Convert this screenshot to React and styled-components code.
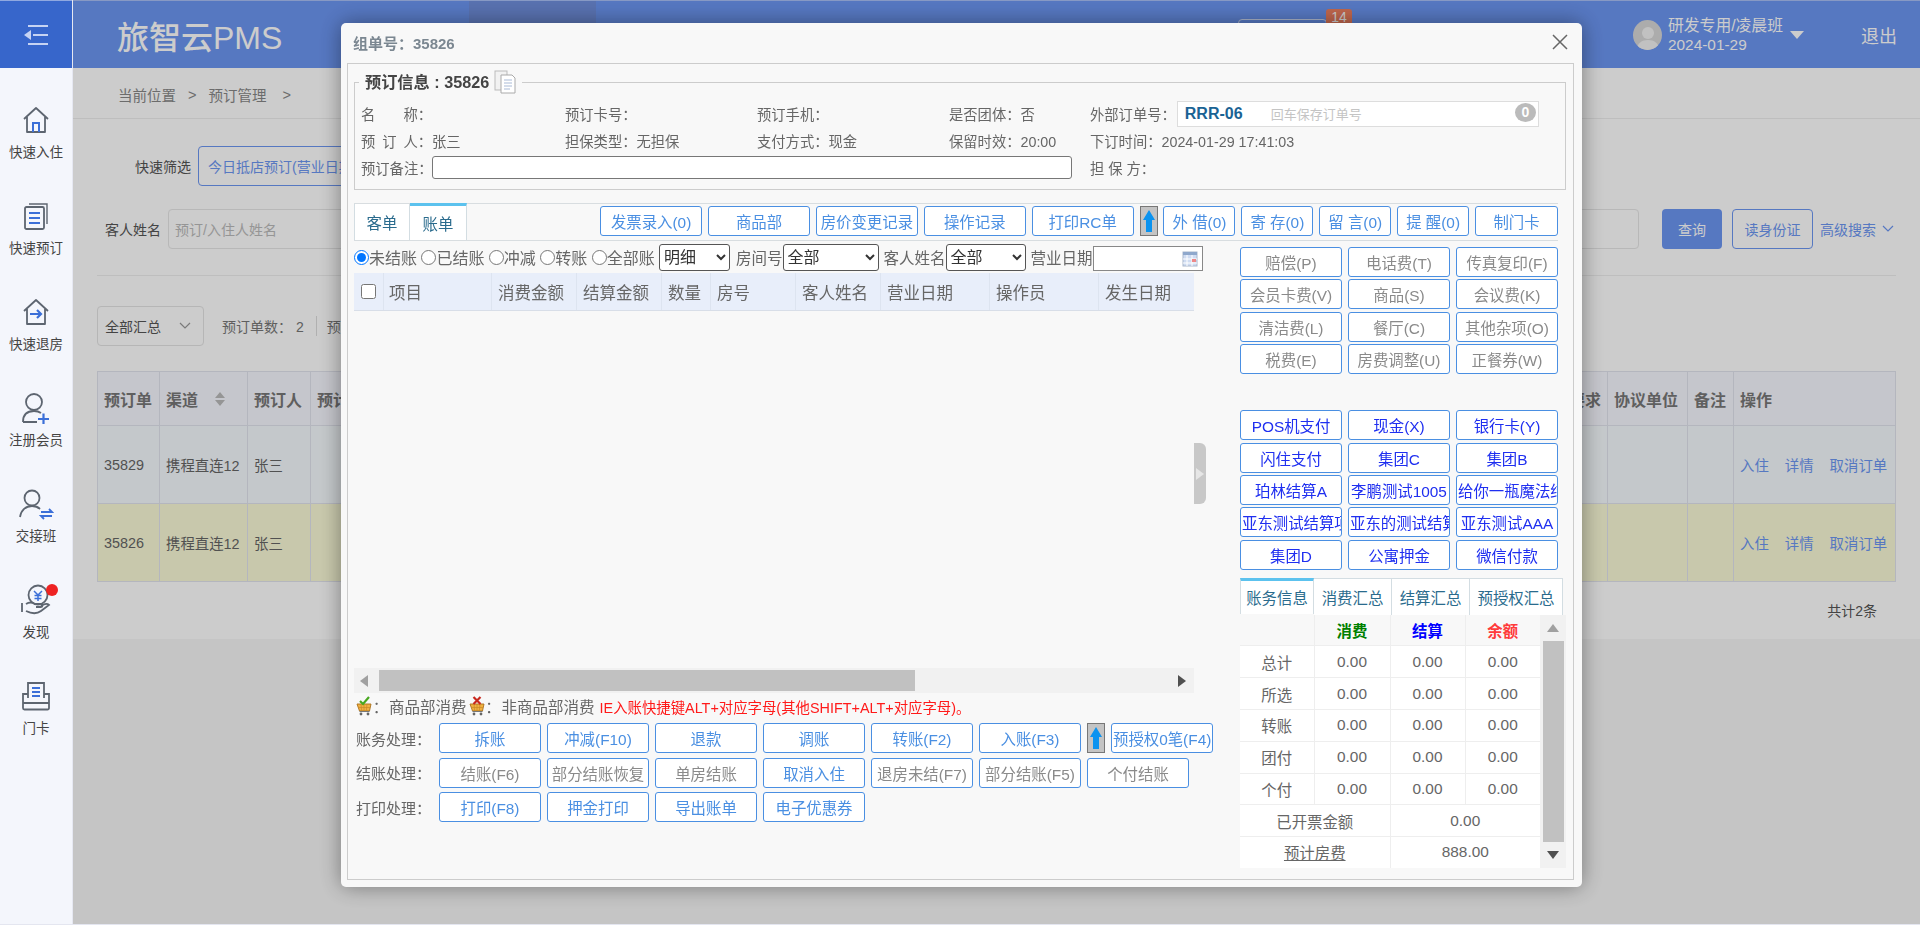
import React from 'react';
import styled, { createGlobalStyle } from 'styled-components';

const FONT = `"Liberation Sans", "Noto Sans CJK SC", sans-serif`;

const Global = createGlobalStyle`
  html, body { margin: 0; padding: 0; height: 100%; overflow: hidden; background: #fff; }
  body { font-family: ${FONT}; color: #666; }
  * { box-sizing: border-box; }
`;

const Page = styled.div`
  display: flex;
  width: 1920px;
  height: 924px;
  overflow: hidden;
`;
const BottomStrip = styled.div`
  height: 4px;
  width: 1920px;
  background: #fff;
  border-top: 1px solid #e4e6f0;
`;

/* sidebar */
const Side = styled.aside`
  width: 73px;
  flex: none;
  background: #f4f6fc;
  border-right: 1px solid #e6e8f2;
  display: flex;
  flex-direction: column;
`;
const Burger = styled.div`
  height: 68px;
  background: #3766cb;
  display: flex;
  align-items: center;
  justify-content: center;
  border-top: 1px solid #8fa8e0;
`;
const SideList = styled.div`
  display: flex;
  flex-direction: column;
  padding-top: 36px;
`;
const SideItem = styled.div`
  height: 96px;
  display: flex;
  flex-direction: column;
  align-items: center;
  font-size: 13.5px;
  color: #444;
  gap: 5px;
  position: relative;
`;
const IconSlot = styled.div`
  height: 32px;
  display: flex;
  align-items: center;
  justify-content: center;
`;
const Dot = styled.span`
  position: absolute;
  top: 0;
  left: 46px;
  width: 12px;
  height: 12px;
  border-radius: 50%;
  background: #ee2222;
`;

/* page behind the dialog */
const Main = styled.main`
  flex: 1;
  display: flex;
  flex-direction: column;
  min-width: 0;
  background: #f7f7f7;
`;
const Head = styled.header`
  height: 68px;
  flex: none;
  background: #6c96f2;
  border-top: 1px solid #a9c0f5;
  display: flex;
  align-items: center;
  color: #fff;
`;
const Brand = styled.div`
  font-size: 32px;
  margin-left: 44px;
  width: 352px;
  font-weight: 500;
  white-space: nowrap;
`;
const NavBlock = styled.div`
  width: 127px;
  height: 67px;
  background: #6f8edc;
`;
const NavBox = styled.div`
  margin-left: 642px;
  width: 89px;
  height: 30px;
  align-self: flex-start;
  margin-top: 18px;
  border: 1px solid #d5e0fb;
  border-radius: 4px;
  position: relative;
`;
const NavBadge = styled.span`
  position: absolute;
  top: -11px;
  right: -26px;
  width: 26px;
  height: 20px;
  background: #f08060;
  border-radius: 3px;
  font-size: 14px;
  color: #fff;
  text-align: center;
`;
const UserBox = styled.div`
  margin-left: 306px;
  display: flex;
  align-items: center;
  gap: 6px;
`;
const Avatar = styled.div`
  width: 29px;
  height: 30px;
  border-radius: 50%;
  background: #d8d8d8;
  display: flex;
  align-items: flex-end;
  justify-content: center;
  overflow: hidden;
`;
const UserText = styled.div`
  font-size: 15.4px;
  line-height: 19px;
  width: 116px;
  color: #fff;
  white-space: nowrap;
`;
const UserName = styled.div`
  font-size: 15.8px;
`;
const Caret = styled.span`
  width: 0;
  height: 0;
  border-left: 7px solid transparent;
  border-right: 7px solid transparent;
  border-top: 8px solid #fff;
`;
const Logout = styled.div`
  margin-left: 57px;
  font-size: 18px;
`;
const Crumbs = styled.div`
  height: 51px;
  flex: none;
  background: #fff;
  border-bottom: 1px solid #eee;
  padding: 3px 0 0 45px;
  display: flex;
  align-items: center;
  gap: 12px;
  font-size: 14.5px;
  color: #888;
`;
const Board = styled.div`
  height: 520px;
  flex: none;
  background: #fff;
  padding: 0 24px;
  display: flex;
  flex-direction: column;
`;
const QuickRow = styled.div`
  display: flex;
  align-items: center;
  height: 40px;
  margin-top: ${p => p.$top}px;
  font-size: 14px;
  color: #555;
`;
const QuickLabel = styled.span`
  margin-left: ${p => p.$left}px;
  margin-right: 7px;
`;
const QuickBtn = styled.div`
  width: 200px;
  height: 40px;
  border: 1px solid #6c96f2;
  border-radius: 4px;
  color: #6c96f2;
  display: flex;
  align-items: center;
  padding-left: 9px;
  white-space: nowrap;
  overflow: hidden;
`;
const Field = styled.div`
  width: ${p => p.$w}px;
  margin-left: ${p => p.$left || 0}px;
  height: 40px;
  border: 1px solid #e6e6e6;
  border-radius: 4px;
  padding-left: 6px;
  display: flex;
  align-items: center;
  color: #bbb;
`;
const QueryBtn = styled.div`
  width: 60px;
  height: 40px;
  margin-left: 23px;
  background: #6c96f2;
  border-radius: 4px;
  color: #fff;
  display: flex;
  align-items: center;
  justify-content: center;
`;
const ReadBtn = styled.div`
  width: 81px;
  height: 40px;
  margin-left: 10px;
  border: 1px solid #6c96f2;
  border-radius: 4px;
  color: #6c96f2;
  display: flex;
  align-items: center;
  justify-content: center;
`;
const MoreLink = styled.span`
  margin-left: 7px;
  color: #6c96f2;
  display: flex;
  align-items: center;
  gap: 6px;
`;
const Rule = styled.div`
  height: 1px;
  background: #eee;
  margin-top: 26px;
`;
const SumRow = styled.div`
  display: flex;
  align-items: center;
  margin-top: 30px;
  height: 40px;
  font-size: 14px;
  color: #777;
`;
const SumSelect = styled.div`
  width: 107px;
  height: 40px;
  border: 1px solid #e4e4e4;
  border-radius: 4px;
  padding: 0 12px 0 7px;
  display: flex;
  align-items: center;
  justify-content: space-between;
  color: #555;
  margin-right: 18px;
`;
const SumItem = styled.span`
  padding-right: 12px;
  margin-right: 10px;
  border-right: ${p => (p.$line ? '1px solid #ddd' : 'none')};
`;
const OrderGrid = styled.div`
  margin-top: 25px;
  display: grid;
  grid-template-columns: 62px 88px 63px 1220px 77px 80px 46px 162px;
  grid-template-rows: 54px 78px 78px;
  border: 1px solid #e2e4ee;
  border-width: 1px 0 0 1px;
`;
const OrderCell = styled.div`
  background: ${p => (p.$head ? '#f7f8ff' : p.$yellow ? '#fbfbd8' : '#f6fbfe')};
  border-right: 1px solid #e2e4ee;
  border-bottom: 1px solid #e2e4ee;
  display: flex;
  align-items: center;
  padding-left: 6px;
  font-size: ${p => (p.$head ? 16 : 14.4)}px;
  font-weight: ${p => (p.$head ? 700 : 400)};
  color: ${p => (p.$head ? '#777' : '#666')};
  gap: 16px;
  white-space: nowrap;
  overflow: hidden;
`;
const RowLink = styled.span`
  color: #6c96f2;
`;
const Total = styled.div`
  margin-top: 18px;
  text-align: right;
  padding-right: 19px;
  font-size: 14px;
  color: #555;
`;

/* overlay and dialog */
const Shade = styled.div`
  position: fixed;
  left: 73px;
  top: 0;
  right: 0;
  bottom: 4px;
  background: rgba(0, 0, 0, 0.2);
`;
const Dialog = styled.div`
  position: fixed;
  left: 341px;
  top: 23px;
  width: 1241px;
  height: 864px;
  background: #f8f8f8;
  border-radius: 5px;
  box-shadow: 0 0 22px rgba(0, 0, 0, 0.4);
  display: flex;
  flex-direction: column;
  padding: 0 8px 7px 6px;
  font-size: 14.3px;
  color: #666;
`;
const DialogHead = styled.div`
  height: 40px;
  flex: none;
  display: flex;
  align-items: center;
  justify-content: space-between;
  padding: 0 5px 2px 6px;
  font-size: 15px;
  font-weight: 700;
  color: #7b8791;
`;
const DialogBody = styled.div`
  flex: 1;
  border: 1px solid #ccc;
  padding: 6px 7px 0 6px;
  display: flex;
  flex-direction: column;
  min-height: 0;
`;
const Info = styled.fieldset`
  margin: 0;
  padding: 6px 0 8px 6px;
  border: 1px solid #ccc;
  min-width: 0;
`;
const InfoTitle = styled.legend`
  margin-left: -2px;
  padding: 0 6px 0 6px;
  height: 24px;
  line-height: 24px;
  font-size: 16.2px;
  font-weight: 700;
  color: #444;
  display: flex;
  align-items: center;
  gap: 5px;
`;
const InfoGrid = styled.div`
  display: grid;
  grid-template-columns: 204px 192px 192px 141px 1fr;
  grid-auto-rows: 27px;
  align-items: center;
  white-space: nowrap;
`;
const NameCell = styled.span`
  display: inline-flex;
  width: 71px;
  justify-content: space-between;
  vertical-align: bottom;
`;
const NoteCell = styled.div`
  grid-column: span 4;
  display: flex;
  align-items: center;
`;
const NoteInput = styled.input`
  width: 640px;
  height: 23px;
  border: 1px solid #777;
  border-radius: 3px;
  background: #fff;
`;
const OutRow = styled.div`
  display: flex;
  align-items: center;
  gap: 1px;
`;
const OutBox = styled.div`
  width: 362px;
  height: 26px;
  border: 1px solid #ddd;
  background: #fff;
  display: flex;
  align-items: center;
  padding-left: 7px;
  position: relative;
  font-size: 13px;
  color: #c4c4c4;
`;
const OutCode = styled.b`
  width: 86px;
  font-size: 16px;
  color: #1a6394;
`;
const OutBadge = styled.span`
  position: absolute;
  right: 2px;
  top: 1px;
  width: 21px;
  height: 19px;
  border-radius: 50%;
  background: #bbb;
  color: #fff;
  font-size: 14px;
  font-weight: 700;
  text-align: center;
  line-height: 18px;
`;
const TabStrip = styled.div`
  margin: 13px 8px 0 0;
  height: 38px;
  flex: none;
  border-top: 1px solid #d8dde0;
  border-bottom: 1px solid #d8dde0;
  display: flex;
  align-items: flex-start;
`;
const Tab = styled.div`
  width: ${p => p.$w}px;
  height: ${p => (p.$on ? 37 : 36)}px;
  display: flex;
  align-items: center;
  justify-content: center;
  background: #fff;
  border: 1px solid #d3dde2;
  border-width: 0 1px 0 ${p => (p.$first ? 1 : 0)}px;
  border-top: ${p => (p.$on ? '3px solid #5cc2ee' : 'none')};
  margin-top: ${p => (p.$on ? -1 : 0)}px;
  font-size: 15.4px;
  color: #2a6b8d;
  white-space: nowrap;
`;
const TopButtons = styled.div`
  margin-left: auto;
  padding-top: 2px;
  display: flex;
  gap: 5.9px;
`;
const Btn = styled.button`
  width: ${p => p.$w || 102}px;
  height: 30px;
  flex: none;
  padding: 0 1px;
  background: #fff;
  border: 1px solid #4a8fe2;
  border-radius: 3px;
  font-family: ${FONT};
  font-size: 15.4px;
  white-space: nowrap;
  overflow: hidden;
  color: ${p => ({ gray: '#8a8a8a', pay: '#1f2ff0' }[p.$tone] || '#4a8fe2')};
`;
const ArrowBtn = styled.div`
  width: 18px;
  height: 30px;
  flex: none;
  background: #c4c4c4;
  border: 1px solid #777;
  display: flex;
  align-items: center;
  justify-content: center;
`;
const Work = styled.div`
  display: grid;
  grid-template-columns: 840px 326px;
  column-gap: 46px;
  flex: 1;
  min-height: 0;
`;
const LeftCol = styled.div`
  display: flex;
  flex-direction: column;
  min-width: 0;
`;
const FilterRow = styled.div`
  height: 32px;
  flex: none;
  display: flex;
  align-items: center;
  font-size: 15.5px;
  white-space: nowrap;
`;
const RadioLabel = styled.label`
  display: flex;
  align-items: center;
  margin-right: 4.4px;
  font-size: 16px;
`;
const Radio = styled.input`
  margin: 0;
  width: 15px;
  height: 15px;
`;
const Pick = styled.select`
  width: ${p => p.$w}px;
  height: 27px;
  margin-right: ${p => p.$right}px;
  flex: none;
  background: #fff;
  border: 1px solid #555;
  border-radius: 3px;
  font-family: ${FONT};
  font-size: 16px;
  color: #333;
`;
const DateBox = styled.div`
  width: 110px;
  height: 25px;
  margin-top: 3px;
  flex: none;
  background: #fff;
  border: 1px solid #888;
  display: flex;
  align-items: center;
  justify-content: flex-end;
  padding-right: 4px;
`;
const BillArea = styled.div`
  height: 395px;
  flex: none;
  position: relative;
`;
const BillHead = styled.div`
  height: 38px;
  display: grid;
  grid-template-columns: 30px 108px 85px 85px 49px 85px 85px 109px 109px 95px;
  background: #e8eefa;
  border-bottom: 1px solid #d8dee8;
`;
const BillCell = styled.div`
  display: flex;
  align-items: center;
  padding-left: ${p => p.$pad ?? 6}px;
  border-right: ${p => (p.$last ? 'none' : '1px solid #dde4f0')};
  font-size: 16.5px;
  color: #666;
  white-space: nowrap;
  overflow: hidden;
`;
const Check = styled.input`
  margin: 0;
  width: 15px;
  height: 15px;
`;
const Handle = styled.div`
  position: absolute;
  right: -12px;
  top: 170px;
  width: 12px;
  height: 61px;
  background: #c8c8c8;
  border-radius: 0 6px 6px 0;
  display: flex;
  align-items: center;
  justify-content: center;
`;
const HScroll = styled.div`
  height: 25px;
  flex: none;
  background: #f1f1f1;
  display: flex;
  align-items: center;
  justify-content: space-between;
  padding-right: 8px;
`;
const HThumbWrap = styled.div`
  display: flex;
  align-items: center;
  gap: 11px;
  padding-left: 6px;
`;
const HThumb = styled.div`
  width: 536px;
  height: 21px;
  background: #c1c1c1;
`;
const Legend = styled.div`
  height: 30px;
  flex: none;
  display: flex;
  align-items: center;
  font-size: 15.5px;
  white-space: nowrap;
  padding: 0 0 4px 2px;
`;
const Colon = styled.span`
  width: 17px;
  text-align: center;
`;
const LegendText = styled.span`
  margin-right: 2px;
`;
const Warn = styled.span`
  color: #ff1a1a;
  font-size: 14.4px;
  margin-left: 5px;
`;
const OpRows = styled.div`
  display: flex;
  flex-direction: column;
  gap: 4.5px;
`;
const OpRow = styled.div`
  display: flex;
  align-items: center;
  gap: 6px;
`;
const OpLabel = styled.div`
  width: 79px;
  padding-left: 2px;
  flex: none;
  font-size: 15px;
  white-space: nowrap;
`;
const RightCol = styled.div`
  padding-top: 6px;
  display: flex;
  flex-direction: column;
`;
const BtnGrid = styled.div`
  display: grid;
  grid-template-columns: repeat(3, 102px);
  column-gap: 6px;
  row-gap: 2.4px;
  margin-top: ${p => p.$top || 0}px;
`;
const SumTabs = styled.div`
  display: flex;
  margin-top: 8px;
  width: 323px;
  height: 37px;
  border-top: 1px solid #d3dde2;
`;
const SumTab = styled(Tab)`
  height: 36px;
  margin-top: ${p => (p.$on ? -1 : 0)}px;
`;
const SumPanel = styled.div`
  display: flex;
`;
const SumTable = styled.table`
  width: 300px;
  height: 253px;
  table-layout: fixed;
  border-collapse: collapse;
  background: #fff;
  font-size: 15.4px;
  color: #666;
  text-align: center;
  td { border: 1px solid #eee; padding: 0; }
  tr:first-child td { background: #f8f8f8; border-top: none; }
  tr td:first-child { border-left: none; }
  tr td:last-child { border-right: none; }
  tr:last-child td { border-bottom: none; }
`;
const SumCol = styled.col`
  width: ${p => p.$w}px;
`;
const Heading = styled.b`
  color: ${p => p.$c};
`;
const Booked = styled.span`
  text-decoration: underline;
`;
const VScroll = styled.div`
  width: 26px;
  height: 253px;
  background: #f1f1f1;
  display: flex;
  flex-direction: column;
  align-items: center;
  justify-content: space-between;
`;
const ArrowSlot = styled.div`
  height: 26px;
  display: flex;
  align-items: center;
  justify-content: center;
`;
const VThumb = styled.div`
  width: 21px;
  flex: 1;
  background: #c1c1c1;
`;

const HomeIcon = () => (
  <svg width="30" height="30" viewBox="0 0 30 30" fill="none">
    <path d="M3 14 15 3l12 11M6 12v15h18V12" stroke="#5d6570" strokeWidth="1.8" strokeLinejoin="round" />
    <path d="M12 27v-9h6v9" stroke="#3b6fd8" strokeWidth="2" />
  </svg>
);
const DocIcon = () => (
  <svg width="30" height="30" viewBox="0 0 30 30" fill="none">
    <rect x="4" y="6" width="19" height="22" rx="1.5" stroke="#5d6570" strokeWidth="1.8" />
    <path d="M8 3h18v20" stroke="#5d6570" strokeWidth="1.4" />
    <path d="M8 12h11M8 17h11M8 22h11" stroke="#3b6fd8" strokeWidth="2.2" />
  </svg>
);
const OutIcon = () => (
  <svg width="30" height="30" viewBox="0 0 30 30" fill="none">
    <path d="M3 14 15 3l12 11M6 12v15h18V12" stroke="#5d6570" strokeWidth="1.8" strokeLinejoin="round" />
    <path d="M9 17h11M16 13l4 4-4 4" stroke="#3b6fd8" strokeWidth="2.2" />
  </svg>
);
const JoinIcon = () => (
  <svg width="30" height="32" viewBox="0 0 30 32" fill="none">
    <circle cx="13" cy="10" r="8" stroke="#5d6570" strokeWidth="1.8" />
    <path d="M2 30c0-7 4-11 11-11 3 0 5 .6 7 2M2 30h14" stroke="#5d6570" strokeWidth="1.8" />
    <path d="M17 27h11M22.500 21.500v11" stroke="#3b6fd8" strokeWidth="2.2" />
  </svg>
);
const ShiftIcon = () => (
  <svg width="36" height="32" viewBox="0 0 36 32" fill="none">
    <circle cx="14" cy="10" r="7.500" stroke="#5d6570" strokeWidth="1.8" />
    <path d="M2 29c1-7 6-11 12-11 3 0 6 1 8 3" stroke="#5d6570" strokeWidth="1.8" />
    <path d="M23 24h11l-3-3M34 28H23l3 3" stroke="#3b6fd8" strokeWidth="1.8" />
  </svg>
);
const HandIcon = () => (
  <svg width="32" height="32" viewBox="0 0 32 32" fill="none">
    <circle cx="18" cy="11" r="9.500" stroke="#5d6570" strokeWidth="1.8" />
    <path d="M14 7l4 4 4-4M18 11v6M14.500 11.500h7M14.500 14.500h7" stroke="#3b6fd8" strokeWidth="1.5" />
    <path d="M2 19v9M6 20c3-2 6-2 9 0h6c2 0 2 3 0 3h-5M6 27c6 3 11 3 15 0l8-6c-2-2-5-1-8 1" stroke="#5d6570" strokeWidth="1.8" />
  </svg>
);
const CardIcon = () => (
  <svg width="30" height="30" viewBox="0 0 30 30" fill="none">
    <path d="M7 17V2h16v15" stroke="#5d6570" strokeWidth="1.8" />
    <path d="M11 7h8M11 11h8M11 15h8" stroke="#3b6fd8" strokeWidth="1.8" />
    <path d="M7 13H2v14a1.500 1.500 0 0 0 1.500 1.500h23A1.500 1.500 0 0 0 28 27V13h-5M2 22h26" stroke="#5d6570" strokeWidth="1.8" />
  </svg>
);
const Chevron = ({ c = '#999' }) => (
  <svg width="12" height="8" viewBox="0 0 12 8" fill="none">
    <path d="M1 1l5 5 5-5" stroke={c} strokeWidth="1.2" />
  </svg>
);
const CopyIcon = () => (
  <svg width="22" height="24" viewBox="0 0 22 24" fill="none">
    <rect x="1" y="1" width="12" height="19" fill="#f2f2f2" stroke="#bbb" />
    <path d="M7 5h11l3 3v15H7z" fill="#fff" stroke="#aaa" />
    <path d="M10 10h8M10 13h8M10 16h8M10 19h6" stroke="#a9bad6" />
  </svg>
);
const UpArrow = () => (
  <svg width="14" height="24" viewBox="0 0 14 24">
    <path d="M7 1l6 10H10v12H4V11H1z" fill="#0b93f0" />
  </svg>
);
const CartIcon = ({ bad }) => (
  <svg width="16" height="20" viewBox="0 0 16 20" fill="none">
    <path d="M1 8h14l-1.500 7h-10z" fill="#f0b040" stroke="#a8701c" strokeWidth=".9" />
    <path d="M5 8l.7 7M8 8v7M11 8l-.7 7M2 11.500h12" stroke="#c98a28" strokeWidth=".7" />
    <path d="M3.500 15.500h10" stroke="#777" strokeWidth="1" />
    <circle cx="5" cy="18" r="1.400" fill="#666" />
    <circle cx="12" cy="18" r="1.400" fill="#666" />
    {bad
      ? <path d="M4.500 1l7 7M11.500 1l-7 7" stroke="#c8281e" strokeWidth="2.200" />
      : <path d="M4 5l3 3 6-7" stroke="#48a820" strokeWidth="2.200" />}
  </svg>
);
const CalendarIcon = () => (
  <svg width="16" height="16" viewBox="0 0 16 16">
    <rect x="1" y="1" width="14" height="14" fill="#cfdcf2" stroke="#aab8cc" />
    <rect x="1" y="1" width="14" height="3" fill="#8fa8cc" />
    <path d="M5 4v11M10 4v11M1 8h14M1 12h14" stroke="#fff" />
    <rect x="10" y="8" width="4" height="3" fill="#e88" />
  </svg>
);
const Tri = ({ dir, c }) => {
  const paths = { up: 'M0 8L6 0l6 8z', down: 'M0 0l6 8 6-8z', left: 'M8 0v12L0 6z', right: 'M0 0v12l8-6z' };
  const vertical = dir === 'up' || dir === 'down';
  return (
    <svg width={vertical ? 12 : 8} height={vertical ? 8 : 12} viewBox={vertical ? '0 0 12 8' : '0 0 8 12'}>
      <path d={paths[dir]} fill={c} />
    </svg>
  );
};

const sideItems = [
  ['快速入住', <HomeIcon />],
  ['快速预订', <DocIcon />],
  ['快速退房', <OutIcon />],
  ['注册会员', <JoinIcon />],
  ['交接班', <ShiftIcon />],
  ['发现', <HandIcon />, true],
  ['门卡', <CardIcon />],
];
const topButtons = [
  ['发票录入(0)'], ['商品部'], ['房价变更记录'], ['操作记录'], ['打印RC单'], null,
  ['外 借(0)', 72], ['寄 存(0)', 72], ['留 言(0)', 72], ['提 醒(0)', 72], ['制门卡', 83],
];
const billCols = ['消费金额', '结算金额', '数量', '房号', '客人姓名', '营业日期', '操作员', '发生日期'];
const feeButtons = [
  '赔偿(P)', '电话费(T)', '传真复印(F)', '会员卡费(V)', '商品(S)', '会议费(K)',
  '清洁费(L)', '餐厅(C)', '其他杂项(O)', '税费(E)', '房费调整(U)', '正餐券(W)',
];
const payButtons = [
  'POS机支付', '现金(X)', '银行卡(Y)', '闪住支付', '集团C', '集团B', '珀林结算A', '李鹏测试1005',
  '给你一瓶魔法结算', '亚东测试结算项', '亚东的测试结算', '亚东测试AAA', '集团D', '公寓押金', '微信付款',
];
const summaryRows = ['总计', '所选', '转账', '团付', '个付'];

const orderRow = (id, yellow) => (
  <>
    <OrderCell $yellow={yellow}>{id}</OrderCell>
    <OrderCell $yellow={yellow}>携程直连12</OrderCell>
    <OrderCell $yellow={yellow}>张三</OrderCell>
    <OrderCell $yellow={yellow} />
    <OrderCell $yellow={yellow} />
    <OrderCell $yellow={yellow} />
    <OrderCell $yellow={yellow} />
    <OrderCell $yellow={yellow}>
      <RowLink>入住</RowLink><RowLink>详情</RowLink><RowLink>取消订单</RowLink>
    </OrderCell>
  </>
);

export default function App() {
  return (
    <>
      <Global />
      <Page>
        <Side>
          <Burger>
            <svg width="26" height="22" viewBox="0 0 26 22" fill="none">
              <path d="M5 2h20M10 11h15M5 20h20" stroke="#c6d3f3" strokeWidth="2.200" />
              <path d="M1 11l7-5v10z" fill="#c6d3f3" />
            </svg>
          </Burger>
          <SideList>
            {sideItems.map(([label, icon, dot]) => (
              <SideItem key={label}>
                <IconSlot>{icon}</IconSlot>
                {dot && <Dot />}
                {label}
              </SideItem>
            ))}
          </SideList>
        </Side>

        <Main>
          <Head>
            <Brand>旅智云PMS</Brand>
            <NavBlock />
            <NavBox><NavBadge>14</NavBadge></NavBox>
            <UserBox>
              <Avatar>
                <svg width="22" height="26" viewBox="0 0 22 26"><circle cx="11" cy="9" r="6" fill="#f2f2f2" /><path d="M0 26c0-7 5-10 11-10s11 3 11 10z" fill="#f2f2f2" /></svg>
              </Avatar>
              <UserText><UserName>研发专用/凌晨班</UserName>2024-01-29</UserText>
              <Caret />
            </UserBox>
            <Logout>退出</Logout>
          </Head>
          <Crumbs><span>当前位置</span><span>&gt;</span><span>预订管理</span><span>&nbsp;&gt;</span></Crumbs>
          <Board>
            <QuickRow $top={27}>
              <QuickLabel $left={38}>快速筛选</QuickLabel>
              <QuickBtn>今日抵店预订(营业日期)</QuickBtn>
            </QuickRow>
            <QuickRow $top={23}>
              <QuickLabel $left={8}>客人姓名</QuickLabel>
              <Field $w={300}>预订/入住人姓名</Field>
              <Field $w={339} $left={832} />
              <QueryBtn>查询</QueryBtn>
              <ReadBtn>读身份证</ReadBtn>
              <MoreLink>高级搜索<Chevron c="#6c96f2" /></MoreLink>
            </QuickRow>
            <Rule />
            <SumRow>
              <SumSelect>全部汇总<Chevron /></SumSelect>
              <SumItem $line>预订单数：&nbsp;2</SumItem>
              <SumItem>预订间数：2</SumItem>
            </SumRow>
            <OrderGrid>
              {['预订单', '渠道', '预订人', '预计到店', '特殊要求', '协议单位', '备注', '操作'].map(h => (
                <OrderCell $head key={h}>
                  {h}
                  {h === '渠道' && (
                    <svg width="12" height="16" viewBox="0 0 12 16"><path d="M6 1l5 6H1zM6 15l5-6H1z" fill="#bbb" /></svg>
                  )}
                </OrderCell>
              ))}
              {orderRow('35829', false)}
              {orderRow('35826', true)}
            </OrderGrid>
            <Total>共计2条</Total>
          </Board>
        </Main>

        <Shade />

        <Dialog>
          <DialogHead>
            组单号：35826
            <svg width="18" height="18" viewBox="0 0 18 18" fill="none">
              <path d="M2 2l14 14M16 2L2 16" stroke="#666" strokeWidth="1.500" />
            </svg>
          </DialogHead>
          <DialogBody>
            <Info>
              <InfoTitle>预订信息 : 35826 <CopyIcon /></InfoTitle>
              <InfoGrid>
                <span><NameCell><span>名</span><span>称：</span></NameCell></span>
                <span>预订卡号：</span>
                <span>预订手机：</span>
                <span>是否团体：否</span>
                <OutRow>外部订单号：<OutBox><OutCode>RRR-06</OutCode>回车保存订单号<OutBadge>0</OutBadge></OutBox></OutRow>
                <span><NameCell><span>预</span><span>订</span><span>人：</span></NameCell>张三</span>
                <span>担保类型：无担保</span>
                <span>支付方式：现金</span>
                <span>保留时效：20:00</span>
                <span>下订时间：2024-01-29 17:41:03</span>
                <NoteCell>预订备注：<NoteInput readOnly /></NoteCell>
                <span>担 保 方：</span>
              </InfoGrid>
            </Info>

            <TabStrip>
              <Tab $w={56} $first>客单</Tab>
              <Tab $w={57} $on>账单</Tab>
              <TopButtons>
                {topButtons.map((b, i) => (b
                  ? <Btn key={b[0]} $w={b[1]}>{b[0]}</Btn>
                  : <ArrowBtn key={i}><UpArrow /></ArrowBtn>))}
              </TopButtons>
            </TabStrip>

            <Work>
              <LeftCol>
                <FilterRow>
                  <RadioLabel><Radio type="radio" name="st" defaultChecked />未结账</RadioLabel>
                  <RadioLabel><Radio type="radio" name="st" />已结账</RadioLabel>
                  <RadioLabel><Radio type="radio" name="st" />冲减</RadioLabel>
                  <RadioLabel><Radio type="radio" name="st" />转账</RadioLabel>
                  <RadioLabel><Radio type="radio" name="st" />全部账</RadioLabel>
                  <Pick $w={71} $right={6}><option>明细</option></Pick>
                  房间号
                  <Pick $w={96} $right={5}><option>全部</option></Pick>
                  客人姓名
                  <Pick $w={80} $right={5}><option>全部</option></Pick>
                  营业日期
                  <DateBox><CalendarIcon /></DateBox>
                </FilterRow>
                <BillArea>
                  <BillHead>
                    <BillCell $pad={7}><Check type="checkbox" /></BillCell>
                    <BillCell $pad={5}>项目</BillCell>
                    {billCols.map((c, i) => <BillCell key={c} $last={i === billCols.length - 1}>{c}</BillCell>)}
                  </BillHead>
                  <Handle><Tri dir="right" c="#e6e6e6" /></Handle>
                </BillArea>
                <HScroll>
                  <HThumbWrap>
                    <Tri dir="left" c="#a0a0a0" />
                    <HThumb />
                  </HThumbWrap>
                  <Tri dir="right" c="#505050" />
                </HScroll>
                <Legend>
                  <CartIcon /><Colon>：</Colon><LegendText>商品部消费</LegendText>
                  <CartIcon bad /><Colon>：</Colon>非商品部消费
                  <Warn>IE入账快捷键ALT+对应字母(其他SHIFT+ALT+对应字母)。</Warn>
                </Legend>
                <OpRows>
                  <OpRow>
                    <OpLabel>账务处理：</OpLabel>
                    <Btn>拆账</Btn><Btn>冲减(F10)</Btn><Btn>退款</Btn><Btn>调账</Btn><Btn>转账(F2)</Btn><Btn>入账(F3)</Btn>
                    <ArrowBtn><UpArrow /></ArrowBtn>
                    <Btn>预授权0笔(F4)</Btn>
                  </OpRow>
                  <OpRow>
                    <OpLabel>结账处理：</OpLabel>
                    <Btn $tone="gray">结账(F6)</Btn><Btn $tone="gray">部分结账恢复</Btn><Btn $tone="gray">单房结账</Btn>
                    <Btn>取消入住</Btn>
                    <Btn $tone="gray">退房未结(F7)</Btn><Btn $tone="gray">部分结账(F5)</Btn><Btn $tone="gray">个付结账</Btn>
                  </OpRow>
                  <OpRow>
                    <OpLabel>打印处理：</OpLabel>
                    <Btn>打印(F8)</Btn><Btn>押金打印</Btn><Btn>导出账单</Btn><Btn>电子优惠券</Btn>
                  </OpRow>
                </OpRows>
              </LeftCol>

              <RightCol>
                <BtnGrid>
                  {feeButtons.map(b => <Btn key={b} $tone="gray">{b}</Btn>)}
                </BtnGrid>
                <BtnGrid $top={36}>
                  {payButtons.map(b => <Btn key={b} $tone="pay">{b}</Btn>)}
                </BtnGrid>
                <SumTabs>
                  <SumTab $w={74} $first $on>账务信息</SumTab>
                  <SumTab $w={78}>消费汇总</SumTab>
                  <SumTab $w={78}>结算汇总</SumTab>
                  <SumTab $w={93}>预授权汇总</SumTab>
                </SumTabs>
                <SumPanel>
                  <SumTable>
                    <colgroup><SumCol $w={74} /><SumCol $w={76} /><SumCol $w={75} /><SumCol $w={75} /></colgroup>
                    <tbody>
                      <tr>
                        <td />
                        <td><Heading $c="#008000">消费</Heading></td>
                        <td><Heading $c="#0000ff">结算</Heading></td>
                        <td><Heading $c="#ff3b3b">余额</Heading></td>
                      </tr>
                      {summaryRows.map(r => (
                        <tr key={r}><td>{r}</td><td>0.00</td><td>0.00</td><td>0.00</td></tr>
                      ))}
                      <tr><td colSpan="2">已开票金额</td><td colSpan="2">0.00</td></tr>
                      <tr><td colSpan="2"><Booked>预计房费</Booked></td><td colSpan="2">888.00</td></tr>
                    </tbody>
                  </SumTable>
                  <VScroll>
                    <ArrowSlot><Tri dir="up" c="#a0a0a0" /></ArrowSlot>
                    <VThumb />
                    <ArrowSlot><Tri dir="down" c="#505050" /></ArrowSlot>
                  </VScroll>
                </SumPanel>
              </RightCol>
            </Work>
          </DialogBody>
        </Dialog>
      </Page>
      <BottomStrip />
    </>
  );
}
